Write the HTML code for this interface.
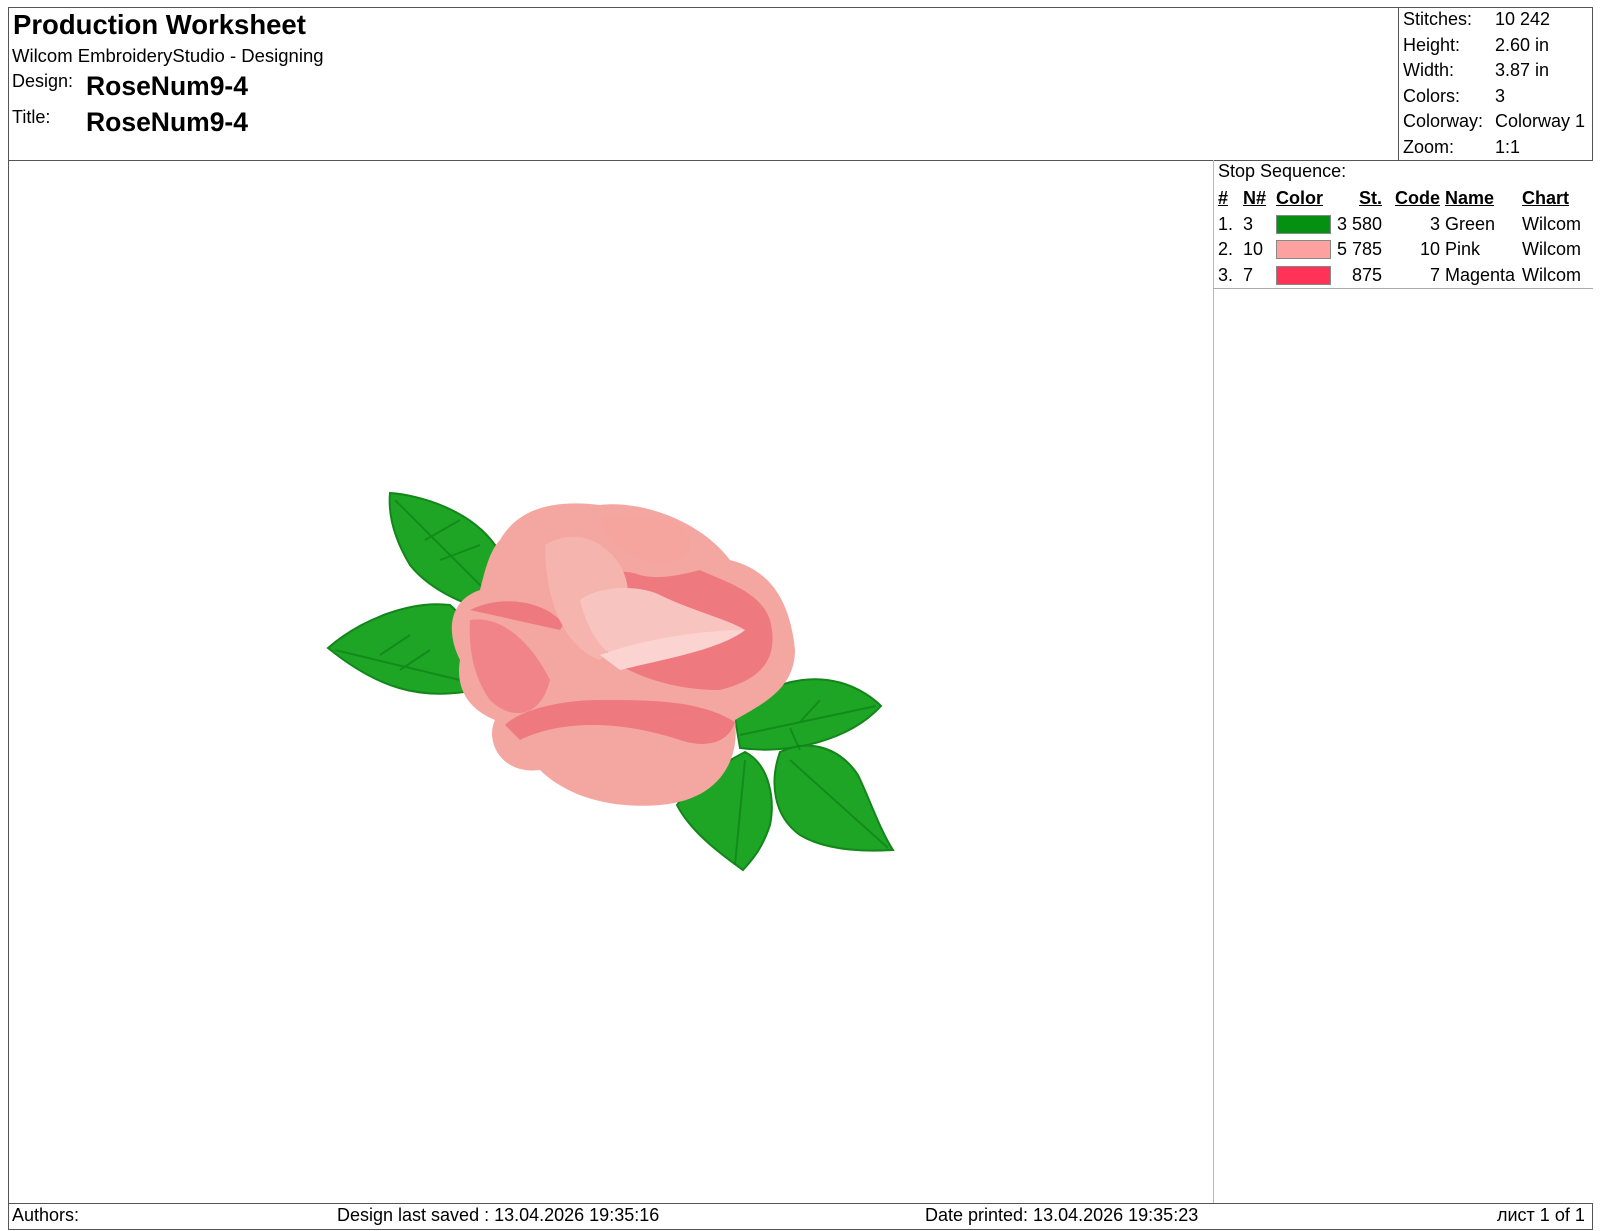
<!DOCTYPE html>
<html><head><meta charset="utf-8"><style>
*{margin:0;padding:0;box-sizing:border-box}
body{width:1600px;height:1231px;background:#fff;font-family:"Liberation Sans",Arial,sans-serif;color:#000;position:relative;overflow:hidden}
.a{position:absolute;white-space:nowrap}
.l{position:absolute;background:#555}
table{border-collapse:collapse;font-size:18px}
td{padding:0;height:25.5px}
</style></head><body>
<div class="l" style="left:8px;top:7px;width:1585px;height:1px"></div>
<div class="l" style="left:8px;top:7px;width:1px;height:1222px"></div>
<div class="l" style="left:1592px;top:7px;width:1px;height:154px"></div>
<div class="l" style="left:8px;top:160px;width:1585px;height:1px"></div>
<div class="l" style="left:1398px;top:7px;width:1px;height:154px"></div>
<div class="a" style="left:13px;top:9px;font-size:27.5px;font-weight:bold">Production Worksheet</div>
<div class="a" style="left:12px;top:45px;font-size:18.5px">Wilcom EmbroideryStudio - Designing</div>
<div class="a" style="left:12px;top:71px;font-size:18px">Design:</div>
<div class="a" style="left:86px;top:71px;font-size:26.5px;font-weight:bold">RoseNum9-4</div>
<div class="a" style="left:12px;top:107px;font-size:18px">Title:</div>
<div class="a" style="left:86px;top:107px;font-size:26.5px;font-weight:bold">RoseNum9-4</div>
<div class="a" style="left:1403px;top:7px;font-size:18px;line-height:25.5px">Stitches:<br>Height:<br>Width:<br>Colors:<br>Colorway:<br>Zoom:</div>
<div class="a" style="left:1495px;top:7px;font-size:18px;line-height:25.5px">10 242<br>2.60 in<br>3.87 in<br>3<br>Colorway 1<br>1:1</div>
<div class="l" style="left:1213px;top:160px;width:1px;height:1043px;background:#bbb"></div>
<div class="l" style="left:1213px;top:288px;width:380px;height:1px;background:#aaa"></div>
<div class="a" style="left:1218px;top:161px;font-size:18px">Stop Sequence:</div>
<table class="a" style="left:1218px;top:186px">
<tr style="font-weight:bold;text-decoration:underline"><td style="width:25px">#</td><td style="width:33px">N#</td><td style="width:56px">Color</td><td style="width:50px;text-align:right">St.</td><td style="width:58px;text-align:right">Code</td><td style="width:82px;padding-left:5px">Name</td><td>Chart</td></tr>
<tr><td>1.</td><td>3</td><td><div style="width:55px;height:19px;background:#069012;border:1px solid #888"></div></td><td style="text-align:right">3 580</td><td style="text-align:right">3</td><td style="padding-left:5px">Green</td><td>Wilcom</td></tr>
<tr><td>2.</td><td>10</td><td><div style="width:55px;height:19px;background:#fda0a0;border:1px solid #888"></div></td><td style="text-align:right">5 785</td><td style="text-align:right">10</td><td style="padding-left:5px">Pink</td><td>Wilcom</td></tr>
<tr><td>3.</td><td>7</td><td><div style="width:55px;height:19px;background:#ff3358;border:1px solid #888"></div></td><td style="text-align:right">875</td><td style="text-align:right">7</td><td style="padding-left:5px">Magenta</td><td>Wilcom</td></tr>
</table>
<div class="l" style="left:8px;top:1203px;width:1585px;height:1px"></div>
<div class="l" style="left:8px;top:1229px;width:1585px;height:1px"></div>
<div class="l" style="left:1592px;top:1203px;width:1px;height:27px"></div>
<div class="a" style="left:12px;top:1205px;font-size:18px">Authors:</div>
<div class="a" style="left:337px;top:1205px;font-size:18px">Design last saved : 13.04.2026 19:35:16</div>
<div class="a" style="left:925px;top:1205px;font-size:18px">Date printed: 13.04.2026 19:35:23</div>
<div class="a" style="left:1497px;top:1205px;font-size:18px">лист 1 of 1</div>
<svg class="a" style="left:0;top:0" width="1600" height="1231">
<g fill="#1ea526" stroke="#13861a" stroke-width="2">
<path d="M390 493 C420 495 470 510 495 545 C515 575 515 600 505 612 C470 610 430 590 410 565 C395 540 388 515 390 493Z"/>
<path d="M328 648 C360 620 410 600 450 605 C470 620 470 660 464 692 C420 698 380 690 328 648Z"/>
<path d="M734 712 C770 680 830 662 878 703 L881 706 C850 740 790 755 740 748Z"/>
<path d="M745 752 C770 765 775 800 770 825 C762 850 750 862 743 870 C715 850 690 830 677 805 C690 785 720 765 745 752Z"/>
<path d="M780 752 C810 738 840 748 858 775 C870 800 880 830 893 850 C860 852 825 850 800 835 C772 815 770 780 780 752Z"/>
</g>
<g stroke="#0c7a14" stroke-width="2" fill="none" opacity=".6">
<path d="M395 500 L495 600 M425 540 L460 520 M440 560 L480 545"/><path d="M335 650 L460 680 M380 655 L410 635 M400 670 L430 650"/>
<path d="M876 706 L740 735 M800 722 L820 700 M790 728 L800 750"/><path d="M745 760 L735 865"/><path d="M790 760 L888 848"/>
</g>
<path d="M500 540 C520 505 560 500 600 505 C640 500 700 520 730 560 C770 570 790 600 795 650 C795 690 760 705 735 720 C740 760 720 800 660 805 C600 810 560 790 540 770 C500 775 485 740 495 720 C470 710 455 690 460 660 C445 630 450 600 480 590 C485 570 490 550 500 540Z" fill="#f4a7a0"/>
<path d="M470 610 C500 595 540 600 560 620 C600 660 650 690 720 690 C760 680 780 660 770 620 C760 590 720 580 700 570 C680 575 660 580 640 575 C600 560 580 600 560 630Z" fill="#ee7a80"/>
<path d="M520 740 C560 720 620 720 680 740 C710 750 730 740 735 722 C700 700 650 700 600 700 C560 700 520 710 505 725Z" fill="#ee7a80"/>
<path d="M470 620 C500 615 530 640 550 680 C540 720 510 720 490 700 C475 680 468 650 470 620Z" fill="#f08488"/>
<path d="M545 545 C570 530 600 535 620 565 C640 600 620 640 600 660 C570 650 545 610 545 545Z" fill="#f6b4ae"/>
<path d="M580 600 C600 585 640 585 660 595 C690 610 730 620 745 630 C720 650 680 650 640 660 C610 665 590 640 580 600Z" fill="#f8c4c0"/>
<path d="M600 655 C640 640 700 630 745 630 C720 650 660 660 620 670Z" fill="#fbd3d0"/>
<path d="M600 520 C620 510 650 515 680 525 C700 545 690 560 660 565 C630 560 610 545 600 520Z" fill="#f5a49e"/>
</svg>
</body></html>
